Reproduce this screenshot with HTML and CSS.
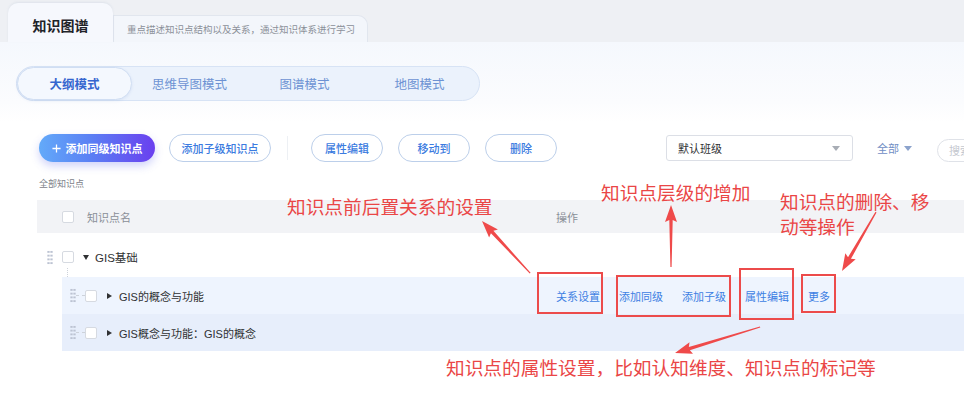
FILE: index.html
```html
<!DOCTYPE html>
<html lang="zh-CN">
<head>
    <meta charset="UTF-8">
    <meta name="viewport" content="width=device-width, initial-scale=1.0">
    <title>知识图谱</title>
    <link rel="stylesheet" href="styles.css">
</head>
<body>
    <div class="app">
        <!-- 顶部页签 -->
        <div class="tabs">
            <div class="tab-main">知识图谱</div>
            <div class="tab-desc">重点描述知识点结构以及关系，通过知识体系进行学习</div>
        </div>

        <div class="panel">
            <!-- 模式切换 -->
            <div class="modes">
                <div class="mode active">大纲模式</div>
                <div class="mode">思维导图模式</div>
                <div class="mode">图谱模式</div>
                <div class="mode">地图模式</div>
            </div>

            <!-- 工具栏 -->
            <div class="toolbar">
                <button class="btn btn-primary">
                    <svg class="plus" viewBox="0 0 10 10"><path d="M5 0.5v9M0.5 5h9" /></svg>
                    添加同级知识点
                </button>
                <button class="btn btn-wide">添加子级知识点</button>
                <span class="divider"></span>
                <button class="btn">属性编辑</button>
                <button class="btn">移动到</button>
                <button class="btn">删除</button>

                <div class="select">
                    <span>默认班级</span>
                    <i class="caret"></i>
                </div>
                <div class="filter">全部 <i class="caret caret-blue"></i></div>
                <div class="search">搜索知识点</div>
            </div>

            <div class="crumb">全部知识点</div>

            <!-- 知识点列表 -->
            <div class="table">
                <div class="thead">
                    <div class="col-name">
                        <span class="check"></span>
                        <span>知识点名</span>
                    </div>
                    <div class="col-ops">操作</div>
                </div>

                <div class="row root">
                    <span class="handle"></span>
                    <span class="check"></span>
                    <i class="arrow-down"></i>
                    <span class="title">GIS基础</span>
                </div>

                <div class="row child">
                    <div class="col-name">
                        <span class="handle"></span>
                        <span class="link"></span>
                        <span class="check"></span>
                        <i class="arrow-right"></i>
                        <span class="title">GIS的概念与功能</span>
                    </div>
                    <div class="ops">
                        <a>关系设置</a>
                        <a>添加同级</a>
                        <a>添加子级</a>
                        <a>属性编辑</a>
                        <a>更多</a>
                    </div>
                </div>

                <div class="row child alt">
                    <div class="col-name">
                        <span class="handle"></span>
                        <span class="link"></span>
                        <span class="check"></span>
                        <i class="arrow-right"></i>
                        <span class="title">GIS概念与功能：GIS的概念</span>
                    </div>
                </div>
            </div>
        </div>

        <!-- 标注层 -->
        <div class="notes">
            <div class="note note-rel">知识点前后置关系的设置</div>
            <div class="note note-level">知识点层级的增加</div>
            <div class="note note-move">知识点的删除、移<br>动等操作</div>
            <div class="note note-attr">知识点的属性设置，比如认知维度、知识点的标记等</div>

            <div class="mark mark-rel"></div>
            <div class="mark mark-level"></div>
            <div class="mark mark-attr"></div>
            <div class="mark mark-more"></div>

            <svg class="arrows" width="964" height="417" viewBox="0 0 964 417">
                <g transform="translate(482 221) rotate(-132.7)">
                    <polygon points="-71,-0.6 -15,-1.7 -17,-6 0,0 -17,6 -15,1.7 -71,0.6" />
                </g>
                <g transform="translate(671 205) rotate(-90)">
                    <polygon points="-62,-0.6 -15,-1.7 -17,-6 0,0 -17,6 -15,1.7 -62,0.6" />
                </g>
                <g transform="translate(842 271) rotate(120)">
                    <polygon points="-68,-0.6 -15,-1.7 -17,-6 0,0 -17,6 -15,1.7 -68,0.6" />
                </g>
                <g transform="translate(675 353) rotate(163)">
                    <polygon points="-89,-0.6 -15,-1.7 -17,-6 0,0 -17,6 -15,1.7 -89,0.6" />
                </g>
            </svg>
        </div>
    </div>
</body>
</html>
```

FILE: styles.css
```css
* {
    box-sizing: border-box;
}
body {
    margin: 0;
    font-family: "Liberation Sans", "Noto Sans CJK SC", sans-serif;
    color: #333;
    background: #fff;
    overflow: hidden;
}
.app {
    position: relative;
    width: 964px;
    height: 417px;
    overflow: hidden;
}

/* 页签 */
.tabs {
    height: 42px;
    background: #eef0f4;
    display: flex;
    align-items: flex-end;
    padding-left: 8px;
}
.tab-main {
    width: 105px;
    height: 39px;
    padding-top: 4px;
    background: #f6f8fd;
    border-radius: 10px 10px 0 0;
    box-shadow: 0 -1px 2px rgba(180, 190, 210, 0.25);
    font-family: "Noto Sans CJK SC", sans-serif;
    font-size: 14px;
    font-weight: 700;
    color: #1f2329;
    display: flex;
    align-items: center;
    justify-content: center;
    position: relative;
    z-index: 1;
}
.tab-desc {
    width: 255px;
    height: 27px;
    background: #f3f6fb;
    border: 1px solid #e1e6ee;
    border-bottom: none;
    border-radius: 0 10px 0 0;
    padding-left: 13px;
    font-family: "Noto Sans CJK SC", sans-serif;
    font-size: 9.5px;
    color: #8b9099;
    display: flex;
    align-items: center;
}

/* 主面板 */
.panel {
    padding-top: 24px;
    height: 375px;
    background: linear-gradient(180deg, #f5f8fd 0, #fbfcfe 60px, #fff 80px);
}
.modes {
    margin-left: 16px;
    width: 464px;
    height: 35px;
    display: flex;
    background: #ebf2fc;
    border: 1px solid #d7e3f5;
    border-radius: 18px;
}
.mode {
    flex: 0 0 115px;
    display: flex;
    align-items: center;
    justify-content: center;
    font-family: "Noto Sans CJK SC", sans-serif;
    font-size: 12.5px;
    font-weight: 400;
    color: #6d92d3;
}
.mode.active {
    background: #f4f8fe;
    border: 1px solid #d0def3;
    border-radius: 17px;
    color: #3566cf;
    font-weight: 700;
    box-shadow: 0 1px 3px rgba(80, 120, 200, 0.12);
}

/* 工具栏 */
.toolbar {
    margin-top: 33px;
    height: 28px;
    padding-left: 39px;
    display: flex;
    align-items: center;
}
.toolbar > * {
    flex-shrink: 0;
}
.btn {
    width: 72px;
    height: 28px;
    margin-right: 15px;
    padding: 0;
    border: 1px solid #bccfea;
    border-radius: 14px;
    background: #fff;
    font-family: "Noto Sans CJK SC", sans-serif;
    font-size: 11px;
    font-weight: 500;
    color: #3b7be0;
    cursor: pointer;
}
.btn-wide {
    width: 102px;
}
.btn-primary {
    width: 116px;
    margin-right: 14px;
    border: none;
    background: linear-gradient(90deg, #63aaf9 0%, #5a7ff4 45%, #6a3fef 100%);
    color: #fff;
    font-weight: 700;
    box-shadow: 0 4px 9px rgba(100, 110, 240, 0.3);
    display: flex;
    align-items: center;
    justify-content: center;
    gap: 5px;
}
.plus {
    width: 9px;
    height: 9px;
}
.plus path {
    stroke: #fff;
    stroke-width: 1.4;
    fill: none;
}
.divider {
    width: 1px;
    height: 24px;
    background: #edf0f4;
    margin: 0 23px 0 1px;
}
.select {
    margin-left: 94px;
    width: 187px;
    height: 26px;
    border: 1px solid #dcdfe6;
    border-radius: 3px;
    padding: 0 12px 0 11px;
    display: flex;
    align-items: center;
    justify-content: space-between;
    font-family: "Noto Sans CJK SC", sans-serif;
    font-size: 11px;
    color: #303133;
}
.caret {
    width: 0;
    height: 0;
    border-left: 4px solid transparent;
    border-right: 4px solid transparent;
    border-top: 5px solid #a8adb5;
}
.caret-blue {
    border-top-color: #8ca3cc;
    margin-left: 5px;
}
.filter {
    margin-left: 24px;
    display: flex;
    align-items: center;
    white-space: nowrap;
    font-family: "Noto Sans CJK SC", sans-serif;
    font-size: 11px;
    color: #6f8dc4;
}
.search {
    margin-left: 25px;
    margin-top: 4px;
    width: 130px;
    height: 23px;
    border: 1px solid #dfe2e8;
    border-radius: 12px;
    padding-left: 11px;
    display: flex;
    align-items: center;
    white-space: nowrap;
    font-family: "Noto Sans CJK SC", sans-serif;
    font-size: 11px;
    color: #c4c8cf;
}

.crumb {
    margin: 15px 0 0 39px;
    height: 14px;
    line-height: 14px;
    font-family: "Noto Sans CJK SC", sans-serif;
    font-size: 9px;
    color: #7d828a;
}

/* 列表 */
.table {
    margin: 9px 0 0 37px;
}
.thead {
    height: 33px;
    background: #f2f3f6;
    display: flex;
    align-items: center;
    font-family: "Noto Sans CJK SC", sans-serif;
    font-size: 11px;
    color: #8a8f98;
}
.thead .col-name {
    flex: 0 0 519px;
    padding-left: 25px;
    display: flex;
    align-items: center;
    gap: 13px;
}
.check {
    flex: 0 0 12px;
    width: 12px;
    height: 12px;
    background: #fff;
    border: 1px solid #d6dae1;
    border-radius: 2px;
}
.handle {
    flex: 0 0 6px;
    width: 6px;
    height: 15px;
    background-image: radial-gradient(circle, #bcc3d2 1px, transparent 1.3px);
    background-size: 3px 3.75px;
}
.title {
    font-size: 11px;
    color: #303133;
    white-space: nowrap;
}

.row {
    display: flex;
    align-items: center;
}
.row.root {
    position: relative;
    height: 44px;
    padding: 4px 0 0 10px;
}
.row.root .check {
    margin-left: 9px;
}
/* 父节点到子节点的虚线 */
.row.root::after {
    content: "";
    position: absolute;
    left: 30px;
    top: 35px;
    height: 9px;
    border-left: 1px dotted #cdd2da;
}
.row.root .title {
    margin-left: 6px;
    font-size: 11.5px;
}
.arrow-down {
    margin-left: 9px;
    width: 0;
    height: 0;
    border-left: 3.5px solid transparent;
    border-right: 3.5px solid transparent;
    border-top: 5px solid #303133;
}
.arrow-right {
    margin-left: 10px;
    width: 0;
    height: 0;
    border-top: 3.5px solid transparent;
    border-bottom: 3.5px solid transparent;
    border-left: 5px solid #303133;
}
.row.child {
    margin-left: 25px;
    height: 37px;
    background: #eef4fe;
}
.row.child.alt {
    background: #e7eefb;
}
.row.child .col-name {
    flex: 0 0 494px;
    padding-left: 8px;
    display: flex;
    align-items: center;
}
.row.child .title {
    margin-left: 7px;
}
.link {
    flex: 0 0 9px;
    border-top: 1px dashed #cdd2da;
}
.ops {
    display: flex;
    gap: 19px;
}
.ops a {
    font-family: "Noto Sans CJK SC", sans-serif;
    font-size: 11px;
    color: #3d7fe3;
    cursor: pointer;
}

/* 标注 */
.notes {
    position: absolute;
    left: 0;
    top: 0;
    width: 964px;
    height: 417px;
    pointer-events: none;
}
.note {
    position: absolute;
    font-family: "Noto Sans CJK SC", sans-serif;
    font-size: 18.7px;
    line-height: 20px;
    color: #ea4646;
    white-space: nowrap;
}
.note-rel {
    left: 287px;
    top: 196px;
}
.note-level {
    left: 601px;
    top: 182px;
}
.note-move {
    left: 780px;
    top: 188px;
    line-height: 25px;
}
.note-attr {
    left: 446px;
    top: 357px;
}
.mark {
    position: absolute;
    border: 2px solid #ec4b4b;
}
.mark-rel {
    left: 537px;
    top: 272px;
    width: 66px;
    height: 42px;
}
.mark-level {
    left: 616px;
    top: 275px;
    width: 115px;
    height: 42px;
}
.mark-attr {
    left: 739px;
    top: 268px;
    width: 55px;
    height: 52px;
}
.mark-more {
    left: 801px;
    top: 274px;
    width: 35px;
    height: 39px;
}
.arrows {
    position: absolute;
    left: 0;
    top: 0;
}
.arrows polygon {
    fill: #ef4a4a;
}
```
